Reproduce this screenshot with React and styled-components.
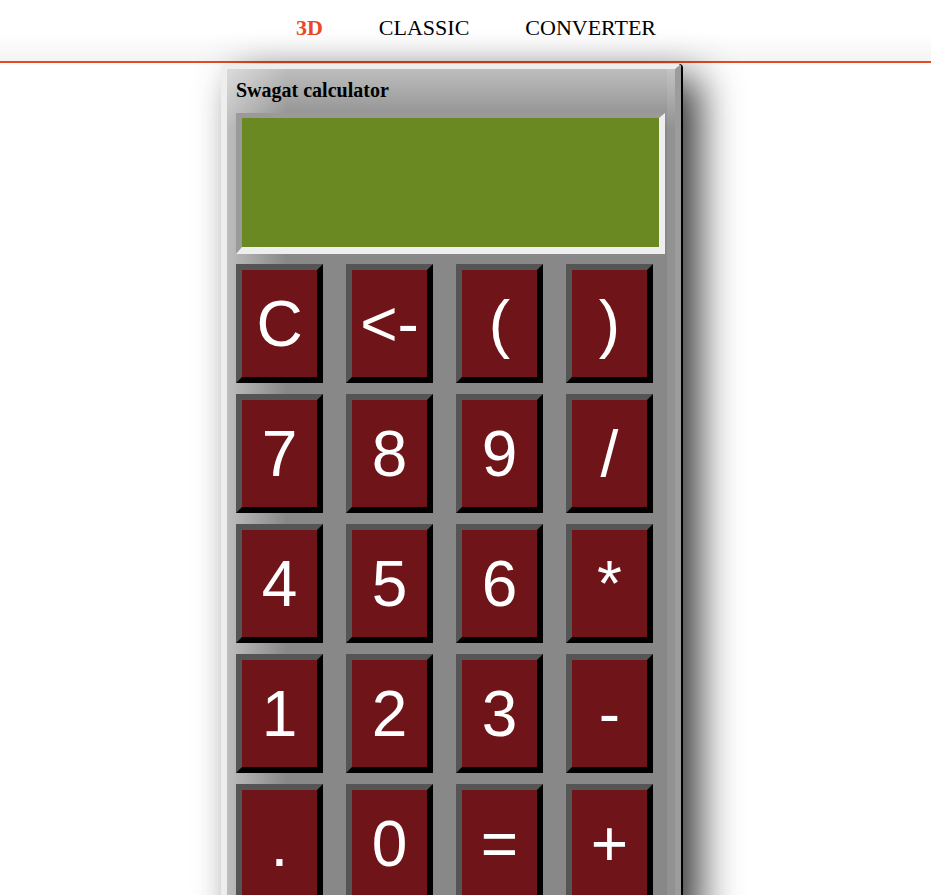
import React from "react";
import styled, { createGlobalStyle } from "styled-components";

const Global = createGlobalStyle`
  html, body { margin: 0; padding: 0; background: #fff; }
  body { font-family: "Liberation Serif", "Times New Roman", serif; overflow: hidden; }
`;

const Header = styled.nav`
  box-sizing: border-box;
  height: 63px;
  border-bottom: 2px solid #e64a22;
  background: linear-gradient(to bottom, #ffffff 55%, #f4f4f4 100%);
  display: flex;
  justify-content: center;
  align-items: center;
  gap: 56px;
  padding-left: 21px;
  padding-bottom: 6px;
`;

const NavItem = styled.a`
  font-size: 22px;
  line-height: 24px;
  color: ${(p) => (p.$active ? "#e64a22" : "#000")};
  font-weight: ${(p) => (p.$active ? 700 : 400)};
  text-decoration: none;
`;

const Stage = styled.main`
  padding: 1px 0 0 221px;
`;

const Calculator = styled.section`
  width: 429px;
  border-style: solid;
  border-width: 5px 6px 0 6px;
  border-color: #eeeeee #9c9c9c #eeeeee #eeeeee;
  border-radius: 5px 4px 0 0;
  background:
    linear-gradient(to bottom, rgba(255, 255, 255, 0.45), rgba(255, 255, 255, 0) 60px),
    linear-gradient(to right, rgba(255, 255, 255, 0.45), rgba(255, 255, 255, 0) 60px),
    linear-gradient(to left, #929292 8px, #888888 8px);
  box-shadow: 2px 0 0 #000, 18px 14px 40px rgba(0, 0, 0, 0.8);
  padding: 9px 10px 0 9px;
  height: 840px;
`;

const Title = styled.h1`
  margin: 0 0 11px 0;
  font-size: 20px;
  line-height: 24px;
  font-weight: 700;
  color: #000;
`;

const Display = styled.div`
  box-sizing: border-box;
  width: 429px;
  height: 141px;
  border-style: solid;
  border-width: 5px 6px 7px 6px;
  border-color: #9a9a9a #eeeeee #eeeeee #9a9a9a;
  background: #6b8923;
  margin-bottom: 10px;
`;

const Keys = styled.div`
  display: grid;
  grid-template-columns: repeat(4, 87px);
  grid-auto-rows: 119px;
  column-gap: 23px;
  row-gap: 11px;
`;

const Key = styled.button`
  box-sizing: border-box;
  border-style: solid;
  border-width: 6px;
  border-color: #555555 #000000 #000000 #555555;
  background: #6f1418;
  color: #fff;
  font-family: "Liberation Sans", Arial, sans-serif;
  font-size: 64px;
  line-height: 1;
  padding: 0;
  margin: 0;
  display: flex;
  align-items: center;
  justify-content: center;
  cursor: pointer;
`;

const keys = ["C", "<-", "(", ")", "7", "8", "9", "/", "4", "5", "6", "*", "1", "2", "3", "-", ".", "0", "=", "+"];

export default function App() {
  return (
    <>
      <Global />
      <Header>
        <NavItem $active href="#">3D</NavItem>
        <NavItem href="#">CLASSIC</NavItem>
        <NavItem href="#">CONVERTER</NavItem>
      </Header>
      <Stage>
        <Calculator>
          <Title>Swagat calculator</Title>
          <Display />
          <Keys>
            {keys.map((k) => (
              <Key key={k}>{k}</Key>
            ))}
          </Keys>
        </Calculator>
      </Stage>
    </>
  );
}
